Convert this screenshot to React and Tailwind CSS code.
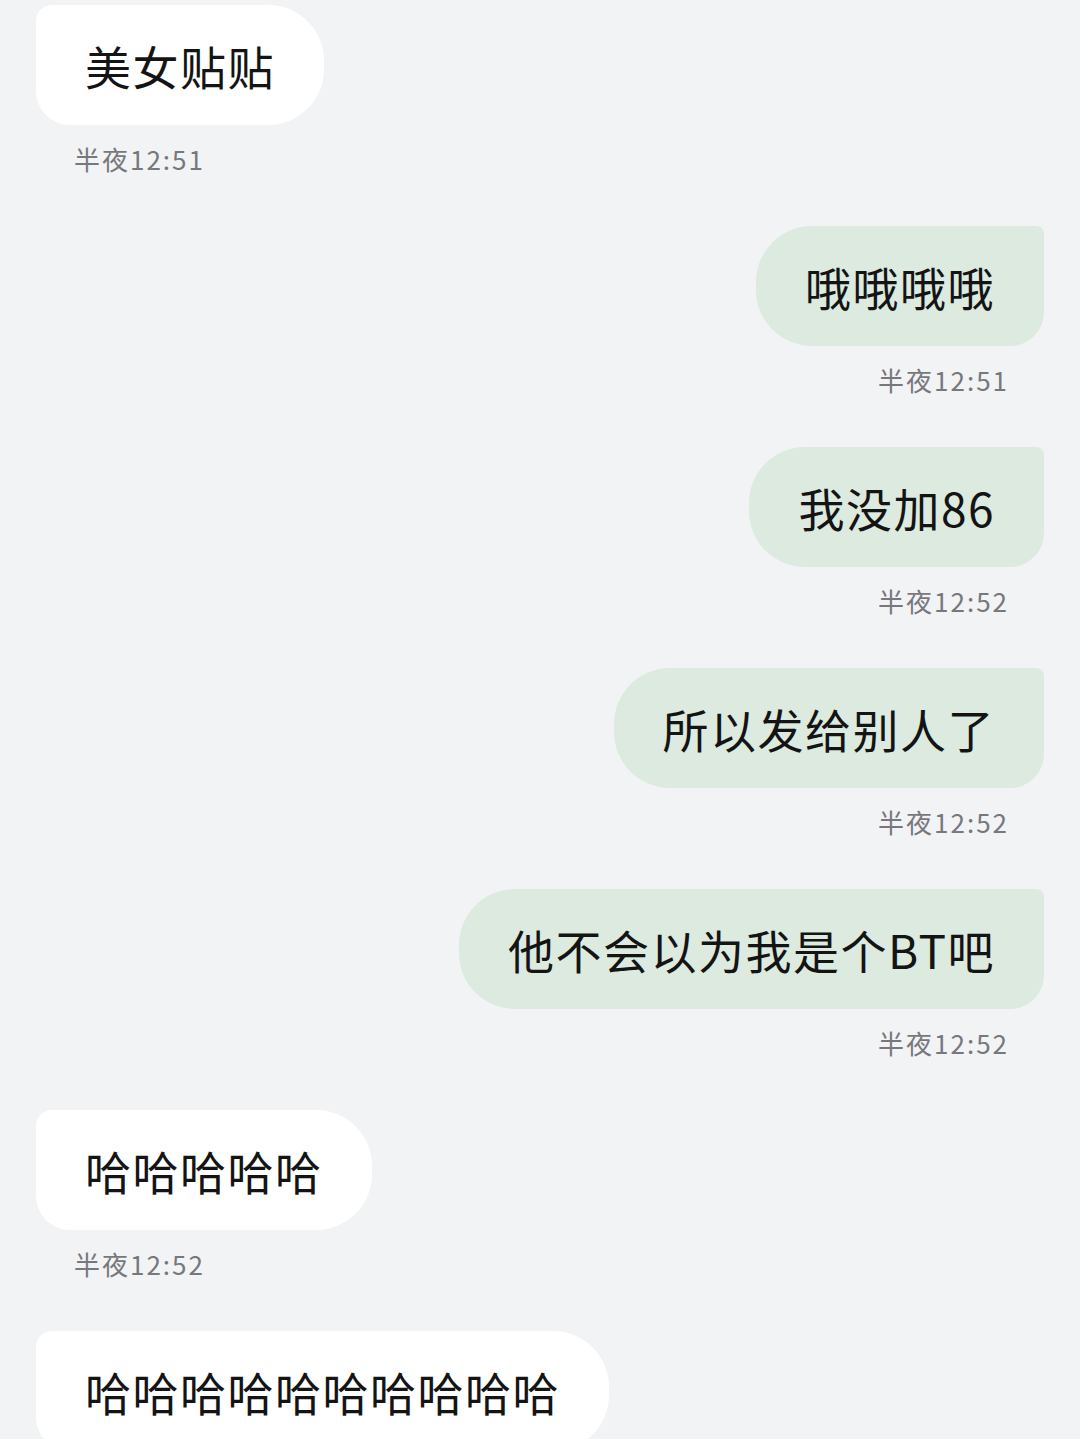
const messages = [
    { side: "left", text: "美女贴贴", time: "半夜12:51" },
    { side: "right", text: "哦哦哦哦", time: "半夜12:51" },
    { side: "right", text: "我没加86", time: "半夜12:52" },
    { side: "right", text: "所以发给别人了", time: "半夜12:52" },
    { side: "right", text: "他不会以为我是个BT吧", time: "半夜12:52" },
    { side: "left", text: "哈哈哈哈哈", time: "半夜12:52" },
    { side: "left", text: "哈哈哈哈哈哈哈哈哈哈", time: "半夜12:52" },
];

function Message({ side, text, time }) {
    const mine = side === "right";
    return (
        <div className={mine ? "flex flex-col items-end" : "flex flex-col items-start"}>
            <div
                className={
                    mine
                        ? "h-[120px] flex items-center px-[49px] bg-[#dceadf] rounded-tl-[56px] rounded-bl-[56px] rounded-tr-[8px] rounded-br-[34px]"
                        : "h-[120px] flex items-center px-[49px] bg-white rounded-tl-[16px] rounded-bl-[34px] rounded-tr-[56px] rounded-br-[56px]"
                }
            >
                <span className="text-[46px] leading-none text-[#141414] tracking-[1.5px]">{text}</span>
            </div>
            <div
                className={
                    mine
                        ? "mt-[17px] mb-[50px] mr-[35px] h-[34px] leading-[34px] text-[26px] tracking-[2px] text-[#77777d]"
                        : "mt-[17px] mb-[50px] ml-[38px] h-[34px] leading-[34px] text-[26px] tracking-[2px] text-[#77777d]"
                }
            >
                {time}
            </div>
        </div>
    );
}

export default function App() {
    return (
        <div
            className="bg-[#f2f3f5] w-[1080px] h-[1439px] overflow-hidden px-[36px] pt-[5px]"
            style={{ fontFamily: '"Noto Sans CJK SC", "Noto Sans", sans-serif' }}
        >
            {messages.map((m, i) => (
                <Message key={i} {...m} />
            ))}
        </div>
    );
}
